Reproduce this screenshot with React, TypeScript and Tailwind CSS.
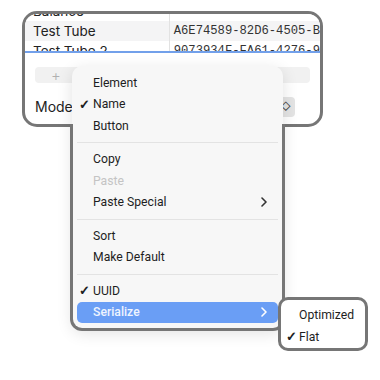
import React from 'react';

const font = { fontFamily: 'Inter, "Noto Sans", sans-serif' };
const menuFont = { fontFamily: 'Roboto, "Noto Sans", sans-serif' };

type Item =
  | { kind: 'item'; label: string; checked?: boolean; disabled?: boolean; sub?: boolean; active?: boolean }
  | { kind: 'sep' };

const ITEMS: Item[] = [
  { kind: 'item', label: 'Element' },
  { kind: 'item', label: 'Name', checked: true },
  { kind: 'item', label: 'Button' },
  { kind: 'sep' },
  { kind: 'item', label: 'Copy' },
  { kind: 'item', label: 'Paste', disabled: true },
  { kind: 'item', label: 'Paste Special', sub: true },
  { kind: 'sep' },
  { kind: 'item', label: 'Sort' },
  { kind: 'item', label: 'Make Default' },
  { kind: 'sep' },
  { kind: 'item', label: 'UUID', checked: true },
  { kind: 'item', label: 'Serialize', sub: true, active: true },
];

const ROWS = [
  { name: 'Balance', id: '0C26A4B2-1209-4F84-A', bg: 'bg-white' },
  { name: 'Test Tube', id: 'A6E74589-82D6-4505-B', bg: 'bg-[#f4f4f5]' },
  { name: 'Test Tube 2', id: '9073934F-FA61-4276-9', bg: 'bg-white' },
];

const Chevron: React.FC<{ className?: string }> = ({ className }) => (
  <svg width="6" height="10" viewBox="0 0 6 10" className={className}>
    <path d="M1 1l4 4-4 4" fill="none" stroke="currentColor" strokeWidth="1.6" strokeLinecap="round" strokeLinejoin="round" />
  </svg>
);

const MenuRow: React.FC<{ item: Extract<Item, { kind: 'item' }> }> = ({ item }) => (
  <div
    className={`relative flex items-center h-[21.5px] mx-[5px] pl-[16px] pr-[11px] rounded-[5px] text-[12.2px] ${
      item.active ? 'bg-[#6a9ef5] text-[#eef4ff] font-medium' : item.disabled ? 'text-[#c4c4c4]' : 'text-[#1e1e1e]'
    }`}
  >
    {item.checked && <span className="absolute left-[2px] text-[13px] font-semibold">✓</span>}
    <span className="flex-1">{item.label}</span>
    {item.sub && <Chevron className={item.active ? 'text-white' : 'text-[#333]'} />}
  </div>
);

export default function App() {
  return (
    <div className="relative w-[380px] h-[380px] bg-white overflow-hidden" style={font}>
      {/* window panel */}
      <div className="ml-[22px] mt-[11px] w-[301px] h-[116px] border-[3px] border-[#767676] rounded-[15px] bg-white overflow-hidden">
        <div className="h-[39px] overflow-hidden border-b-2 border-[#72a0ea]">
          <div className="-mt-[13px]">
            {ROWS.map((r) => (
              <div key={r.name} className={`flex h-[20px] items-center ${r.bg}`}>
                <div className="w-[147px] pl-[8px] text-[13.5px] text-[#222] border-r border-[#e2e2e2] h-full flex items-center">
                  {r.name}
                </div>
                <div
                  className="pl-[4px] text-[12.2px] text-[#333] whitespace-nowrap"
                  style={{ fontFamily: '"Liberation Mono", "DejaVu Sans Mono", monospace' }}
                >
                  {r.id}
                </div>
              </div>
            ))}
          </div>
        </div>
        <div className="px-[10px] pt-[14px]">
          <div className="h-[16px] rounded-[4px] bg-[#f1f1f1] flex items-center pl-[16px] w-[275px]">
            <span className="text-[#b0b0b0] text-[15px] leading-none font-light">+</span>
          </div>
          <div className="mt-[13px] flex items-center justify-between pr-[15px]">
            <span className="text-[14px] text-[#222]">Mode</span>
            <div className="w-[18px] h-[20px] rounded-[4px] bg-[#e4e4e4] flex items-center justify-end pr-[4px] text-[10px] text-[#444]">
              ◇
            </div>
          </div>
        </div>
      </div>

      {/* context menu */}
      <div
        className="absolute left-[72px] top-[66px] w-[211px] h-[263px] rounded-[10px] bg-[#f7f7f7] shadow-[0_4px_16px_rgba(0,0,0,0.12)] pt-[6px]"
        style={menuFont}
      >
        <div className="pointer-events-none absolute -left-[2px] -right-[2px] top-[58px] -bottom-[2px] border-x-[3px] border-b-[3px] border-[#767676] rounded-b-[12px]" />
        {ITEMS.map((it, i) =>
          it.kind === 'sep' ? (
            <div key={i} className="h-[12px] flex items-center mx-[5px]">
              <div className="h-px w-full bg-[#e3e3e3]" />
            </div>
          ) : (
            <MenuRow key={i} item={it} />
          )
        )}
      </div>

      {/* submenu */}
      <div
        className="absolute left-[278px] top-[297px] w-[90px] h-[54px] rounded-[10px] bg-white border-[3px] border-[#767676] pt-[4px] text-[12.2px] text-[#1e1e1e]"
        style={menuFont}
      >
        <div className="relative h-[22px] flex items-center pl-[18px]">Optimized</div>
        <div className="relative h-[22px] flex items-center pl-[18px]">
          <span className="absolute left-[5px] font-semibold text-[13px]">✓</span>
          Flat
        </div>
      </div>
    </div>
  );
}
